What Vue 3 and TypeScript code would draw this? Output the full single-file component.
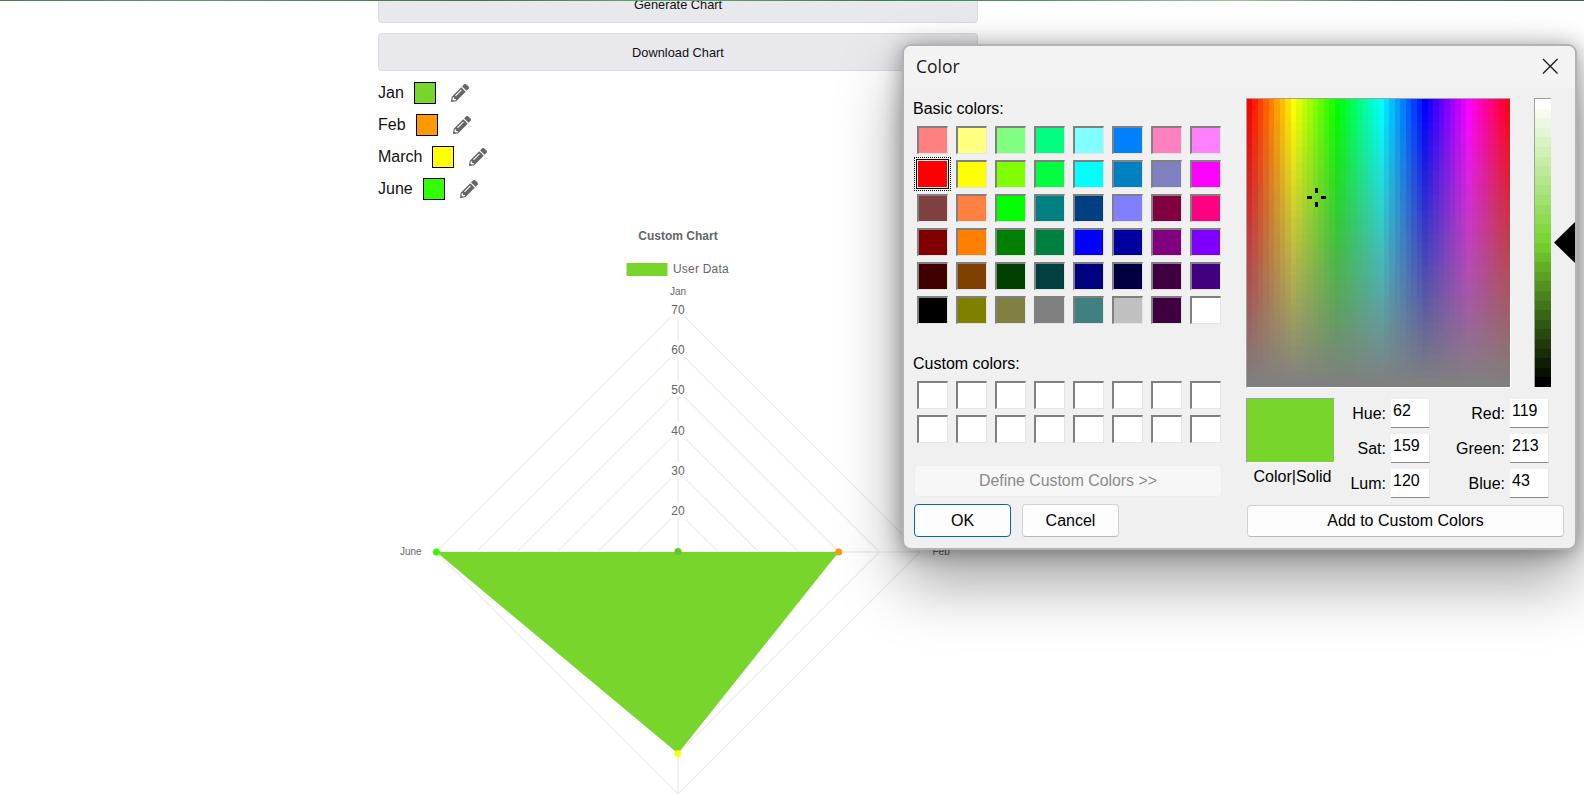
<script setup lang="ts">
// chart colour picker page with the native colour dialog open on top
const legendRows = [
  { label: 'Jan', color: '#77d52b' },
  { label: 'Feb', color: '#ff9900' },
  { label: 'March', color: '#ffff00' },
  { label: 'June', color: '#33ff00' },
];

const basicColors = [
  '#ff8080', '#ffff80', '#80ff80', '#00ff80', '#80ffff', '#0080ff', '#ff80c0', '#ff80ff',
  '#ff0000', '#ffff00', '#80ff00', '#00ff40', '#00ffff', '#0080c0', '#8080c0', '#ff00ff',
  '#804040', '#ff8040', '#00ff00', '#008080', '#004080', '#8080ff', '#800040', '#ff0080',
  '#800000', '#ff8000', '#008000', '#008040', '#0000ff', '#0000a0', '#800080', '#8000ff',
  '#400000', '#804000', '#004000', '#004040', '#000080', '#000040', '#400040', '#400080',
  '#000000', '#808000', '#808040', '#808080', '#408080', '#c0c0c0', '#400040', '#ffffff',
];

// spectrum: stepped like the win32 dialog
const specW = 263;
const specH = 288;
const specCols = 48;
const specRows = 36;
const specCells: { x: number; y: number; w: number; h: number; fill: string }[] = [];
for (let r = 0; r < specRows; r++) {
  for (let c = 0; c < specCols; c++) {
    const hue = (c / specCols) * 360;
    const sat = 100 - (r / (specRows - 1)) * 100;
    specCells.push({
      x: (c * specW) / specCols,
      y: (r * specH) / specRows,
      w: specW / specCols,
      h: specH / specRows,
      fill: `hsl(${hue}, ${sat}%, 50%)`,
    });
  }
}

const lumSteps = 30;
const lumCells = Array.from({ length: lumSteps }, (_, i) => ({
  y: (i * 288) / lumSteps,
  h: 288 / lumSteps,
  fill: `hsl(93, 66%, ${100 - (i / (lumSteps - 1)) * 100}%)`,
}));

const leftFields = [
  { label: 'Hue:', value: '62' },
  { label: 'Sat:', value: '159' },
  { label: 'Lum:', value: '120' },
];
const rightFields = [
  { label: 'Red:', value: '119' },
  { label: 'Green:', value: '213' },
  { label: 'Blue:', value: '43' },
];
const fieldRows = leftFields.map((f, i) => [f, rightFields[i]]);

// radar chart, coordinates inside the svg
const cx = 300;
const cy = 342;
const step = 40.33;
const ticks = [6, 5, 4, 3, 2, 1];
const radius = (n: number) => n * step;
const diamond = (r: number) => `${cx},${cy - r} ${cx + r},${cy} ${cx},${cy + r} ${cx - r},${cy}`;
const pencilPath =
  'M497.9 142.1l-46.1 46.1c-4.7 4.7-12.3 4.7-17 0l-111-111c-4.7-4.7-4.7-12.3 0-17l46.1-46.1c18.7-18.7 49.1-18.7 67.9 0l60.1 60.1c18.8 18.7 18.8 49.1 0 67.9zM284.2 99.8L21.6 362.4.4 483.9c-2.9 16.4 11.4 30.6 27.8 27.8l121.5-21.3 262.6-262.6c4.7-4.7 4.7-12.3 0-17l-111-111c-4.8-4.7-12.4-4.7-17.1 0zM124.1 339.9c-5.5-5.5-5.5-14.3 0-19.8l154-154c5.5-5.5 14.3-5.5 19.8 0s5.5 14.3 0 19.8l-154 154c-5.5 5.5-14.3 5.5-19.8 0zM88 424h48v36.3l-64.5 11.3-31.1-31.1L51.7 376H88v48z';
</script>

<template>
  <div class="page">
    <div class="top-strip"></div>

    <main class="content">
      <button class="page-btn generate">Generate Chart</button>
      <button class="page-btn download">Download Chart</button>

      <div class="legend-rows">
        <div v-for="row in legendRows" :key="row.label" class="legend-row">
          <span class="legend-label">{{ row.label }}</span>
          <span class="legend-swatch" :style="{ background: row.color }"></span>
          <svg class="pencil" viewBox="0 0 512 512" width="18" height="18">
            <path :d="pencilPath" fill="#666666" />
          </svg>
        </div>
      </div>

      <svg class="chart" width="600" height="584" viewBox="0 0 600 584">
        <text x="300" y="30" class="chart-title" text-anchor="middle">Custom Chart</text>
        <rect x="248.5" y="53" width="41" height="13" fill="#77d52b" />
        <text x="295" y="63" class="chart-legend">User Data</text>

        <text x="300" y="85" class="axis-label" text-anchor="middle">Jan</text>
        <text x="554.5" y="344.5" class="axis-label">Feb</text>
        <text x="22" y="344.5" class="axis-label">June</text>

        <polygon
          v-for="n in ticks"
          :key="'ring' + n"
          :points="diamond(radius(n))"
          fill="none"
          stroke="#ececec"
          stroke-width="1.2"
        />
        <line :x1="cx" :y1="cy - radius(6)" :x2="cx" :y2="cy + radius(6)" stroke="#ececec" stroke-width="1.5" />
        <line :x1="cx - radius(6)" :y1="cy" :x2="cx + radius(6)" :y2="cy" stroke="#ececec" stroke-width="1.5" />

        <g v-for="n in ticks" :key="'tick' + n">
          <rect :x="cx - 9" :y="cy - radius(n) - 9" width="18" height="16" fill="#ffffff" />
          <text :x="cx" :y="cy - radius(n) + 3.5" class="tick" text-anchor="middle">{{ (n + 1) * 10 }}</text>
        </g>

        <polygon :points="`${cx},${cy} ${cx + 160.7},${cy} ${cx},${cy + 201.6} ${cx - 241.6},${cy}`" fill="#77d52b" />
        <circle :cx="cx" :cy="cy - 0.5" r="3.5" fill="#66c42e" />
        <circle :cx="cx + 160.7" :cy="cy" r="3.5" fill="#ff9900" />
        <circle :cx="cx" :cy="cy + 201.6" r="3.5" fill="#ffff00" />
        <circle :cx="cx - 241.6" :cy="cy" r="3.5" fill="#33ff00" />
      </svg>
    </main>

    <section class="dialog" role="dialog" aria-label="Color">
      <header class="title-bar">
        <span class="title">Color</span>
        <svg class="close" width="16" height="16" viewBox="0 0 16 16">
          <path d="M1 1L15.5 15.5M15.5 1L1 15.5" stroke="#1a1a1a" stroke-width="1.3" fill="none" />
        </svg>
      </header>

      <div class="dialog-body">
        <div class="left-col">
          <div class="dlg-label basic-label">Basic colors:</div>
          <div class="swatch-grid basic">
            <span
              v-for="(color, i) in basicColors"
              :key="i"
              class="swatch"
              :class="{ selected: i === 8 }"
              :style="{ background: color }"
            ></span>
          </div>

          <div class="dlg-label custom-label">Custom colors:</div>
          <div class="swatch-grid custom">
            <span v-for="i in 16" :key="i" class="swatch blank"></span>
          </div>

          <button class="define-btn">Define Custom Colors &gt;&gt;</button>

          <div class="ok-row">
            <button class="dlg-btn ok">OK</button>
            <button class="dlg-btn">Cancel</button>
          </div>
        </div>

        <div class="right-col">
          <div class="picker-row">
            <div class="sunken">
              <svg class="block-svg" :width="specW" :height="specH" shape-rendering="crispEdges">
                <rect
                  v-for="(cell, i) in specCells"
                  :key="i"
                  :x="cell.x"
                  :y="cell.y"
                  :width="cell.w"
                  :height="cell.h"
                  :fill="cell.fill"
                />
                <rect x="68" y="89" width="3" height="5" fill="#000" />
                <rect x="68" y="103" width="3" height="5" fill="#000" />
                <rect x="60" y="97" width="5" height="3" fill="#000" />
                <rect x="74" y="97" width="5" height="3" fill="#000" />
              </svg>
            </div>

            <div class="sunken lum">
              <svg class="block-svg" width="16" height="288" shape-rendering="crispEdges">
                <rect
                  v-for="(cell, i) in lumCells"
                  :key="i"
                  x="0"
                  :y="cell.y"
                  width="16"
                  :height="cell.h"
                  :fill="cell.fill"
                />
              </svg>
              <span class="lum-arrow"></span>
            </div>
          </div>

          <div class="values-row">
            <div class="preview-col">
              <div class="preview"></div>
              <div class="preview-label">Color|Solid</div>
            </div>

            <div class="fields">
              <template v-for="row in fieldRows" :key="row[0].label">
                <template v-for="field in row" :key="field.label">
                  <span class="field-label">{{ field.label }}</span>
                  <span class="field-input">{{ field.value }}</span>
                </template>
              </template>
            </div>
          </div>

          <button class="dlg-btn add-btn">Add to Custom Colors</button>
        </div>
      </div>
    </section>
  </div>
</template>

<style scoped>
.page {
  position: relative;
  width: 1584px;
  height: 794px;
  overflow: hidden;
  background: #ffffff;
  font-family: "Liberation Sans", Arial, sans-serif;
}

.top-strip {
  position: absolute;
  top: 0;
  left: 0;
  right: 0;
  height: 1px;
  background: linear-gradient(90deg, #4a7a58, #5f9a6c 12%, #3f6f4c 30%, #6aa878 42%, #3d7a4c 55%, #4f9a5f 66%, #9cc8a4 78%, #4e6a58 88%, #3e6450);
  z-index: 5;
}

.content {
  width: 600px;
  margin-left: 378px;
  margin-top: -14px;
  display: flex;
  flex-direction: column;
}

.page-btn {
  height: 37px;
  width: 100%;
  border: 1px solid #dcdce0;
  border-radius: 4px;
  background: #e8e8ed;
  color: #111111;
  font-family: "Liberation Sans", Arial, sans-serif;
  font-size: 12.8px;
  padding: 0;
}

.download {
  margin-top: 10px;
  height: 38px;
}

.legend-rows {
  display: flex;
  flex-direction: column;
  gap: 10px;
  margin-top: 11px;
}

.legend-row {
  display: flex;
  align-items: center;
  height: 22px;
}

.legend-label {
  font-size: 16px;
  color: #111111;
  margin-right: 10px;
}

.legend-swatch {
  width: 22px;
  height: 22px;
  box-sizing: border-box;
  border: 1px solid #000000;
}

.pencil {
  margin-left: 15px;
}

.chart {
  display: block;
  margin-top: 10px;
  flex: none;
}

.chart-title {
  font-size: 12px;
  font-weight: 700;
  fill: #666666;
}

.chart-legend {
  font-size: 12px;
  letter-spacing: 0.2px;
  fill: #666666;
}

.axis-label {
  font-size: 10px;
  fill: #666666;
}

.tick {
  font-size: 12px;
  fill: #666666;
}

/* the dialog is a window floating over the page */
.dialog {
  position: absolute;
  left: 902px;
  top: 44px;
  width: 675px;
  height: 506px;
  box-sizing: border-box;
  border: 2px solid #b2b2b2;
  border-radius: 9px;
  background: #f0f0f0;
  box-shadow: 0 32px 64px rgba(0, 0, 0, 0.37), 0 2px 21px rgba(0, 0, 0, 0.37);
  overflow: hidden;
  color: #000000;
  z-index: 4;
}

.title-bar {
  height: 42px;
  box-sizing: border-box;
  background: #f3f3f3;
  display: flex;
  align-items: center;
  justify-content: space-between;
  padding: 0 17px 2px 12px;
}

.title {
  font-family: "Open Sans", "Liberation Sans", sans-serif;
  font-size: 17.5px;
  color: #1a1a1a;
}

.close {
  display: block;
}

.dialog-body {
  display: grid;
  grid-template-columns: 307px 328px;
  column-gap: 25px;
  padding: 10px 0 0 10px;
}

.dlg-label {
  font-size: 16px;
  line-height: 20px;
  margin-left: -1px;
}

.basic-label {
  margin-top: 1px;
}

.custom-label {
  margin-top: 30px;
}

.swatch-grid {
  display: grid;
  grid-template-columns: repeat(8, 31px);
  grid-auto-rows: 28px;
  column-gap: 8px;
  row-gap: 6px;
  margin: 7px 0 0 3px;
}

.swatch {
  position: relative;
  box-sizing: border-box;
  border-top: 2px solid #808080;
  border-left: 2px solid #808080;
  border-right: 1px solid #e4e4e4;
  border-bottom: 1px solid #e4e4e4;
}

.swatch.blank {
  background: #ffffff;
}

.swatch.selected {
  border: 1px solid #f0f0f0;
  outline: 1px solid #000000;
}

.swatch.selected::after {
  content: "";
  position: absolute;
  inset: -4px;
  border: 1px dotted #000000;
}

.define-btn {
  display: block;
  width: 308px;
  height: 32px;
  margin-top: 22px;
  box-sizing: border-box;
  border: 1px solid #ececec;
  border-radius: 4px;
  background: #f7f7f7;
  color: #8a8a8a;
  font-family: "Liberation Sans", Arial, sans-serif;
  font-size: 15.85px;
  padding: 0;
}

.ok-row {
  display: flex;
  gap: 11px;
  margin-top: 7px;
}

.dlg-btn {
  box-sizing: border-box;
  width: 97px;
  height: 33px;
  border: 1px solid #d2d2d2;
  border-bottom-color: #b8b8b8;
  border-radius: 4px;
  background: #fdfdfd;
  color: #000000;
  font-family: "Liberation Sans", Arial, sans-serif;
  font-size: 16px;
  padding: 0;
}

.dlg-btn.ok {
  border: 1px solid #0067c0;
}

.picker-row {
  display: flex;
  align-items: flex-start;
}

.sunken {
  position: relative;
  box-sizing: content-box;
  border-top: 1px solid #a0a0a0;
  border-left: 1px solid #a0a0a0;
  border-bottom: 1px solid #ffffff;
  border-right: 1px solid #ffffff;
}

.block-svg {
  display: block;
}

.lum {
  margin-left: 23px;
  border-right: none;
  border-bottom: none;
}

.lum-arrow {
  position: absolute;
  left: 19px;
  top: 122px;
  width: 22px;
  height: 43px;
  background: #000000;
  clip-path: polygon(0 50%, 100% 0, 100% 100%);
}

.values-row {
  display: flex;
  margin-top: 10px;
}

.preview-col {
  width: 89px;
  flex: none;
}

.preview {
  box-sizing: border-box;
  height: 65px;
  background: #77d52b;
  border-top: 1px solid #a0a0a0;
  border-left: 1px solid #a0a0a0;
  border-right: 1px solid #ffffff;
  border-bottom: 1px solid #ffffff;
}

.preview-label {
  margin-top: 4px;
  margin-left: 4px;
  text-align: center;
  font-size: 16px;
  line-height: 20px;
  white-space: nowrap;
}

.fields {
  display: grid;
  grid-template-columns: 51px 39px 70px 39px;
  grid-auto-rows: 29px;
  column-gap: 5px;
  row-gap: 6px;
  margin-top: 1px;
}

.field-label {
  font-size: 16px;
  line-height: 29px;
  text-align: right;
}

.field-input {
  box-sizing: border-box;
  background: #ffffff;
  border-bottom: 1px solid #8a8a8a;
  border-right: 1px solid #e4e4e4;
  padding-left: 2px;
  font-size: 16px;
  line-height: 24px;
}

.add-btn {
  display: block;
  width: 317px;
  height: 32px;
  margin: 7px 0 0 1px;
}
</style>

<style>
html,
body {
  margin: 0;
  overflow: hidden;
  background: #ffffff;
}
</style>
